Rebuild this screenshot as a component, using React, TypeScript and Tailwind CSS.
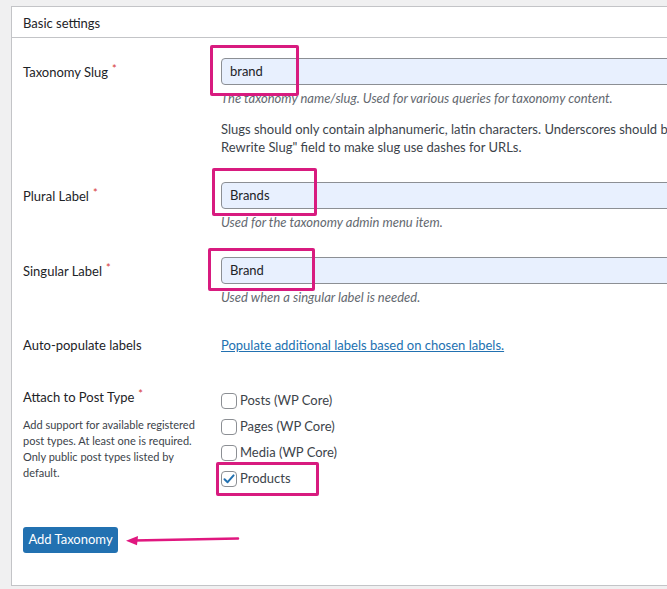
import React from "react";

const Req = () => <span className="text-[#d63638] text-[11px] relative -top-[4px] ml-[4px]">*</span>;

const Input = ({ value }: { value: string }) => (
  <div className="h-[27px] w-[470px] rounded-[4px] border border-[#8c8f94] bg-[#e8f0fe] flex items-center pl-[8px] text-[13px] text-[#1d2327]">
    {value}
  </div>
);

const Desc = ({ children }: { children: React.ReactNode }) => (
  <div className="mt-[4px] text-[13px] leading-[18px] italic text-[#646970]">{children}</div>
);

const Check = ({ label, checked }: { label: string; checked?: boolean }) => (
  <div className="h-[26px] flex items-center pt-[1px]">
    <div className="w-[16px] h-[16px] rounded-[4px] border border-[#8c8f94] bg-white flex items-center justify-center">
      {checked && (
        <svg width="14" height="14" viewBox="0 0 14 14">
          <path d="M2.5 7.2 L5.6 10.2 L11.6 3.4" fill="none" stroke="#2271b1" strokeWidth="2" strokeLinecap="round" strokeLinejoin="round" />
        </svg>
      )}
    </div>
    <span className="ml-[3px] text-[13px] text-[#3c434a]">{label}</span>
  </div>
);

const Box = ({ cls }: { cls: string }) => (
  <div className={"absolute border-[3px] border-[#d81b7f] rounded-[2px] " + cls} />
);

export default function App() {
  return (
    <div
      className="relative w-[667px] h-[589px] overflow-hidden bg-[#f0f0f1] pl-[11px] pt-[6px]"
      style={{ fontFamily: 'Lato, "Liberation Sans", Arial, sans-serif' }}
    >
      <div className="w-[720px] h-[580px] bg-white border border-[#c3c4c7] text-[#1d2327]">
        <div className="h-[31px] border-b border-[#c3c4c7] flex items-center pt-[4px] pl-[11px] text-[13px]">Basic settings</div>
        <div className="pl-[11px]">
          {/* Row 1 */}
          <div className="flex pt-[20px]">
            <div className="w-[198px] shrink-0 h-[27px] flex items-center pt-[3px] text-[13px]">
              Taxonomy Slug<Req />
            </div>
            <div>
              <Input value="brand" />
              <Desc>The taxonomy name/slug. Used for various queries for taxonomy content.</Desc>
              <div className="mt-[13px] text-[13px] leading-[18px] text-[#3c434a] whitespace-nowrap">
                Slugs should only contain alphanumeric, latin characters. Underscores should be converted to dashes. Use the
                <br />
                Rewrite Slug" field to make slug use dashes for URLs.
              </div>
            </div>
          </div>
          {/* Row 2 */}
          <div className="flex pt-[26px]">
            <div className="w-[198px] shrink-0 h-[27px] flex items-center pt-[3px] text-[13px]">
              Plural Label<Req />
            </div>
            <div>
              <Input value="Brands" />
              <Desc>Used for the taxonomy admin menu item.</Desc>
            </div>
          </div>
          {/* Row 3 */}
          <div className="flex pt-[26px]">
            <div className="w-[198px] shrink-0 h-[27px] flex items-center pt-[3px] text-[13px]">
              Singular Label<Req />
            </div>
            <div>
              <Input value="Brand" />
              <Desc>Used when a singular label is needed.</Desc>
            </div>
          </div>
          {/* Row 4 */}
          <div className="flex pt-[30px] text-[13px] leading-[18px]">
            <div className="w-[198px] shrink-0">Auto-populate labels</div>
            <a className="text-[#2271b1] underline">Populate additional labels based on chosen labels.</a>
          </div>
          {/* Row 5 */}
          <div className="flex pt-[33px]">
            <div className="w-[198px] shrink-0 pt-[1px]">
              <div className="text-[13px] leading-[18px]">
                Attach to Post Type<Req />
              </div>
              <div className="mt-[10px] w-[180px] text-[11px] leading-[16px] text-[#3c434a]">
                Add support for available registered post types. At least one is required. Only public post types listed by default.
              </div>
            </div>
            <div>
              <Check label="Posts (WP Core)" />
              <Check label="Pages (WP Core)" />
              <Check label="Media (WP Core)" />
              <Check label="Products" checked />
            </div>
          </div>
          <div className="pt-[36px]">
            <button className="h-[26px] w-[95px] rounded-[3px] bg-[#2271b1] text-white text-[13px] flex items-center justify-center">
              Add Taxonomy
            </button>
          </div>
        </div>
      </div>

      <Box cls="left-[210px] top-[45px] w-[89px] h-[51px]" />
      <Box cls="left-[212px] top-[168px] w-[105px] h-[48px]" />
      <Box cls="left-[208px] top-[248px] w-[107px] h-[43px]" />
      <Box cls="left-[216px] top-[462px] w-[103px] h-[34px]" />

      <svg className="absolute left-[120px] top-[528px]" width="125" height="24" viewBox="0 0 125 24">
        <path d="M118 10.5 L14 12.5" stroke="#e0177f" strokeWidth="2.5" strokeLinecap="round" />
        <path d="M6 12.8 L18 8 L17 17.3 Z" fill="#e0177f" />
      </svg>
    </div>
  );
}
